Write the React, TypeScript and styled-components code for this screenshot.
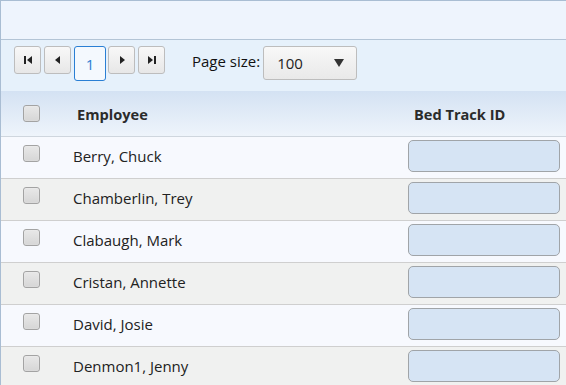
import React from "react";
import styled, { createGlobalStyle } from "styled-components";

const GlobalStyle = createGlobalStyle`
    html, body {
        margin: 0;
        padding: 0;
        background: #ffffff;
    }
    body {
        font-family: "Open Sans", "Liberation Sans", sans-serif;
        font-size: 15px;
        color: #333333;
    }
`

const employees = [
    "Berry, Chuck",
    "Chamberlin, Trey",
    "Clabaugh, Mark",
    "Cristan, Annette",
    "David, Josie",
    "Denmon1, Jenny",
]

const Wrap = styled.div`
    width: 566px;
    height: 385px;
    overflow: hidden;
    box-sizing: border-box;
    border-top: 1px solid #a9bdd3;
    border-left: 1px solid #a9bdd3;
`

const TopBar = styled.div`
    height: 38px;
    background: #eef4fd;
    border-bottom: 1px solid #b3c4d6;
`

const Pager = styled.div`
    height: 51px;
    display: flex;
    align-items: flex-start;
    padding: 6px 0 0 13px;
    box-sizing: border-box;
    background: #e6f1fb;
`

const NavButton = styled.button`
    width: 27px;
    height: 28px;
    margin-right: 3px;
    padding: 0;
    display: flex;
    align-items: center;
    justify-content: center;
    border: 1px solid #bdbdbd;
    border-radius: 3px;
    background: linear-gradient(#f8f8f8, #e7e7e7);
`

const PageNumber = styled.div`
    width: 32px;
    height: 35px;
    margin-right: 2px;
    box-sizing: border-box;
    display: flex;
    align-items: center;
    justify-content: center;
    border: 1px solid #2a7fd4;
    border-radius: 3px;
    background: #f4f9fe;
    color: #2a7fd4;
`

const SizeLabel = styled.span`
    margin-left: 24px;
    margin-right: 3px;
    line-height: 30px;
    color: #111111;
`

const Select = styled.div`
    width: 94px;
    height: 34px;
    box-sizing: border-box;
    display: flex;
    align-items: center;
    justify-content: space-between;
    padding: 0 12px 0 13px;
    border: 1px solid #bdbdbd;
    border-radius: 3px;
    background: linear-gradient(#f8f8f8, #e9e9e9);
    color: #222222;
`

const Grid = styled.div`
    display: grid;
    grid-template-columns: 56px 1fr 165px;
`

const HeadCell = styled.div<{ $pad?: number }>`
    height: 45px;
    display: flex;
    align-items: center;
    padding-left: ${p => p.$pad ?? 0}px;
    background: linear-gradient(#d4e2f3, #eef4fb);
    border-bottom: 1px solid #cfd6de;
    font-size: 14.6px;
    font-weight: 700;
    color: #2b2b2b;
`

const Cell = styled.div<{ $alt: boolean; $pad?: number }>`
    height: 42px;
    box-sizing: border-box;
    display: flex;
    align-items: center;
    padding-left: ${p => p.$pad ?? 0}px;
    padding-bottom: 3px;
    background: ${p => (p.$alt ? "#f0f1f0" : "#f7f9fe")};
    border-bottom: 1px solid #cfcfcf;
    color: #222222;
`

const Check = styled.span<{ $raise?: boolean }>`
    width: 17px;
    height: 17px;
    box-sizing: border-box;
    margin-bottom: ${p => (p.$raise ? 6 : 0)}px;
    border: 1px solid #a3a3a3;
    border-radius: 3px;
    background: linear-gradient(#e8e8e8, #d6d6d6);
    box-shadow: inset 0 0 1px #ffffff;
`

const TrackInput = styled.div`
    width: 152px;
    height: 32px;
    margin-top: -1px;
    box-sizing: border-box;
    border: 1px solid #a0a4a8;
    border-radius: 5px;
    background: #d6e4f4;
`

const Arrow = ({ dir, bar }: { dir: "l" | "r"; bar?: boolean }) => (
    <svg width="10" height="10" viewBox="0 0 10 10">
        {dir === "l" ? (
            <>
                {bar && <rect x="1" y="1" width="2" height="8" fill="#222" />}
                <polygon points={bar ? "9,1 4,5 9,9" : "7,1 2,5 7,9"} fill="#222" />
            </>
        ) : (
            <>
                <polygon points={bar ? "1,1 6,5 1,9" : "3,1 8,5 3,9"} fill="#222" />
                {bar && <rect x="7" y="1" width="2" height="8" fill="#222" />}
            </>
        )}
    </svg>
)

export default function App() {
    return (
        <>
            <GlobalStyle />
            <Wrap>
                <TopBar />
                <Pager>
                    <NavButton><Arrow dir="l" bar /></NavButton>
                    <NavButton><Arrow dir="l" /></NavButton>
                    <PageNumber>1</PageNumber>
                    <NavButton><Arrow dir="r" /></NavButton>
                    <NavButton><Arrow dir="r" bar /></NavButton>
                    <SizeLabel>Page size:</SizeLabel>
                    <Select>
                        <span>100</span>
                        <svg width="10" height="8" viewBox="0 0 10 8">
                            <polygon points="0,0 10,0 5,8" fill="#333" />
                        </svg>
                    </Select>
                </Pager>
                <Grid>
                    <HeadCell $pad={22}><Check /></HeadCell>
                    <HeadCell $pad={20}>Employee</HeadCell>
                    <HeadCell $pad={13}>Bed Track ID</HeadCell>
                    {employees.map((name, i) => (
                        <React.Fragment key={name}>
                            <Cell $alt={i % 2 === 1} $pad={22}><Check $raise /></Cell>
                            <Cell $alt={i % 2 === 1} $pad={16}>{name}</Cell>
                            <Cell $alt={i % 2 === 1} $pad={7}><TrackInput /></Cell>
                        </React.Fragment>
                    ))}
                </Grid>
            </Wrap>
        </>
    )
}
